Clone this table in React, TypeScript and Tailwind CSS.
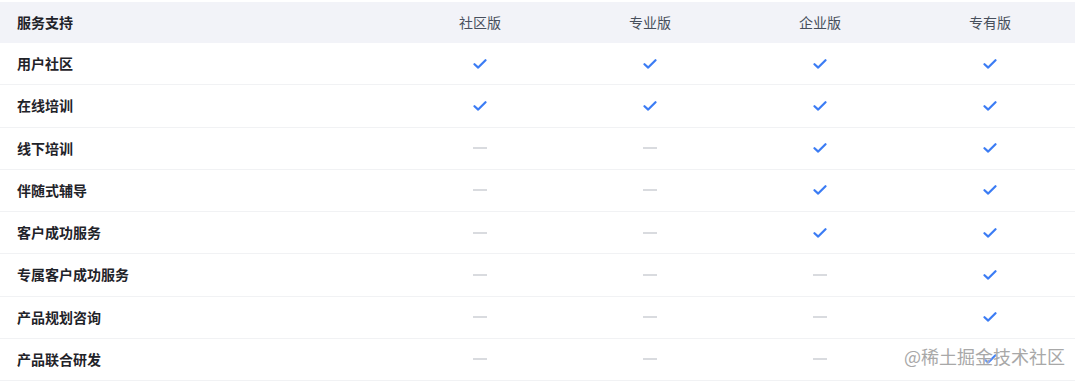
import React from "react";

const plans = ["社区版", "专业版", "企业版", "专有版"];
const rows: [string, boolean[]][] = [
  ["用户社区", [true, true, true, true]],
  ["在线培训", [true, true, true, true]],
  ["线下培训", [false, false, true, true]],
  ["伴随式辅导", [false, false, true, true]],
  ["客户成功服务", [false, false, true, true]],
  ["专属客户成功服务", [false, false, false, true]],
  ["产品规划咨询", [false, false, false, true]],
  ["产品联合研发", [false, false, false, true]],
];

function Check() {
  return (
    <svg width="14" height="12" viewBox="0 0 14 12" fill="none">
      <path d="M1.5 6.2 L5.2 9.6 L12.5 2.2" stroke="#3b7cf4" strokeWidth="2.2" strokeLinecap="round" strokeLinejoin="round" />
    </svg>
  );
}

function Dash() {
  return <div className="w-[14px] h-[2px] bg-[#d9dbdf]" />;
}

export default function App() {
  return (
    <div
      className="relative w-[1080px] h-[383px] bg-white pt-[2px]"
      style={{ fontFamily: '"Noto Sans CJK SC", "Noto Sans", sans-serif' }}
    >
      <div className="w-[1075px]">
        <div className="flex h-[41px] items-center bg-[#f2f3f8]">
          <div className="w-[395px] pl-[17px] text-[14px] font-bold text-[#1f2329]">服务支持</div>
          {plans.map((p) => (
            <div key={p} className="w-[170px] text-center text-[14px] text-[#474f5c]">
              {p}
            </div>
          ))}
        </div>
        {rows.map(([label, vals]) => (
          <div key={label} className="flex h-[42.25px] items-center border-b border-[#f1f2f4]">
            <div className="w-[395px] pl-[17px] text-[14px] font-bold text-[#1f2329]">{label}</div>
            {vals.map((v, i) => (
              <div key={i} className="w-[170px] h-full flex justify-center items-center">
                {v ? <Check /> : <Dash />}
              </div>
            ))}
          </div>
        ))}
      </div>
      <div
        className="absolute left-[904px] top-[347px] text-[18px] text-[#a8a8a8] leading-none"
        style={{ textShadow: "0 0 2px rgba(255,255,255,0.9)" }}
      >
        @稀土掘金技术社区
      </div>
    </div>
  );
}
